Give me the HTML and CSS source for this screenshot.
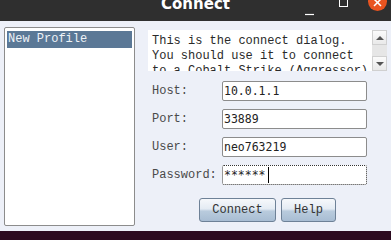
FILE: index.html
```html
<!DOCTYPE html>
<html lang="en">
<head>
  <meta charset="UTF-8" />
  <title>Connect</title>
  <link rel="stylesheet" href="styles.css">
</head>
<body>
  <header class="titlebar">
    <span></span>
    <span class="title">Connect</span>
    <svg class="controls" width="90" height="21" viewBox="0 0 90 21">
      <line x1="4" y1="14.5" x2="13" y2="14.5" stroke="#fff" stroke-width="1.2" />
      <rect x="38.5" y="-3" width="8" height="9.5" fill="none" stroke="#fff" stroke-width="1" />
      <circle cx="76.5" cy="1.5" r="9.5" fill="#e95420" />
      <line x1="73" y1="-1" x2="80" y2="6" stroke="#fff" stroke-width="1.5" />
      <line x1="80" y1="-1" x2="73" y2="6" stroke="#fff" stroke-width="1.5" />
    </svg>
  </header>

  <main class="dialog">
    <div class="profiles">
      <div class="profile selected">New Profile</div>
    </div>

    <div class="panel">
      <div class="desc">
        <div class="desc-text">This is the connect dialog.
You should use it to connect
to a Cobalt Strike (Aggressor)</div>
        <div class="scrollbar">
          <div class="sb-btn"><span class="arrow up"></span></div>
          <div class="sb-track"></div>
          <div class="sb-btn"><span class="arrow down"></span></div>
        </div>
      </div>

      <form class="fields">
        <label for="host">Host:</label>
        <input type="text" id="host" value="10.0.1.1" />

        <label for="port">Port:</label>
        <input type="text" id="port" value="33889" />

        <label for="user">User:</label>
        <input type="text" id="user" value="neo763219" />

        <label for="pass">Password:</label>
        <div class="field focused" id="pass">******<span class="caret"></span></div>
      </form>

      <div class="buttons">
        <button type="button" class="btn connect">Connect</button>
        <button type="button" class="btn help">Help</button>
      </div>
    </div>
  </main>

  <footer class="taskbar"></footer>
</body>
</html>
```

FILE: styles.css
```css
body {
  margin: 0;
  width: 391px;
  height: 240px;
  overflow: hidden;
  background: #edf0f8;
  font-family: "Liberation Mono", "DejaVu Sans Mono", monospace;
  font-size: 12px;
  color: #333;
}
.titlebar {
  height: 21px;
  background: #2f2f2f;
  display: grid;
  grid-template-columns: 1fr auto 1fr;
  overflow: hidden;
}
.title {
  font-family: "DejaVu Sans", sans-serif;
  font-weight: bold;
  font-size: 15px;
  line-height: 15px;
  margin-top: -3px;
  color: #fff;
}
.controls {
  justify-self: end;
  display: block;
}
.dialog {
  height: 210px;
  box-sizing: border-box;
  padding: 6px 4px 5px 4px;
  display: flex;
  gap: 13px;
}
.profiles {
  width: 131px;
  box-sizing: border-box;
  background: #fff;
  border: 1px solid #8c8c8c;
  border-radius: 2px;
  padding: 3px 2px;
}
.profile {
  height: 17px;
  line-height: 17px;
  padding-left: 1px;
  color: #222;
}
.profile.selected {
  background: #5b7896;
  color: #eef2f6;
}
.panel {
  width: 239px;
  padding-top: 3px;
}
.desc {
  height: 41px;
  background: #fff;
  display: flex;
}
.desc-text {
  flex: 1;
  overflow: hidden;
  white-space: pre;
  padding: 4px 0 0 4px;
  line-height: 15px;
  color: #2a2a2a;
}
.scrollbar {
  width: 15px;
  margin-left: 2px;
  display: flex;
  flex-direction: column;
  background: #e6e6e6;
}
.sb-btn {
  height: 15px;
  box-sizing: border-box;
  border: 1px solid #d0d0d0;
  background: linear-gradient(#fbfbfb, #e9e9e9);
  display: flex;
  align-items: center;
  justify-content: center;
}
.sb-track {
  flex: 1;
}
.arrow {
  width: 0;
  height: 0;
  border-left: 4px solid transparent;
  border-right: 4px solid transparent;
}
.arrow.up {
  border-bottom: 4px solid #555;
}
.arrow.down {
  border-top: 4px solid #555;
}
.fields {
  margin: 10px 0 0 4px;
  display: grid;
  grid-template-columns: 70px 145px;
  grid-auto-rows: 20px;
  row-gap: 8px;
  align-items: center;
}
label {
  color: #4a4a4a;
}
input, .field {
  height: 20px;
  box-sizing: border-box;
  border: 1px solid #8c8c8c;
  border-radius: 2px;
  background: #fff;
  padding: 0 1px;
  font-family: "DejaVu Sans Mono", monospace;
  font-size: 11.5px;
  color: #222;
}
.field {
  display: flex;
  align-items: center;
  line-height: 18px;
}
.field.focused {
  border: 1px dotted #333;
  align-items: flex-start;
}
.caret {
  display: inline-block;
  width: 1px;
  height: 16px;
  margin: 1px 0 0 2px;
  background: #000;
}
.buttons {
  margin-top: 13px;
  display: flex;
  justify-content: center;
  gap: 5px;
}
.btn {
  height: 24px;
  box-sizing: border-box;
  border: 1px solid #6e8197;
  border-radius: 3px;
  background: linear-gradient(#f6f8fb 0%, #e4ebf3 45%, #b9cbdd 55%, #a8bdd3 100%);
  font-family: "Liberation Mono", monospace;
  font-size: 12px;
  color: #333;
  padding: 0;
}
.btn.connect {
  width: 77px;
}
.btn.help {
  width: 55px;
}
.taskbar {
  height: 9px;
  background: #2c0a1f;
}
```
